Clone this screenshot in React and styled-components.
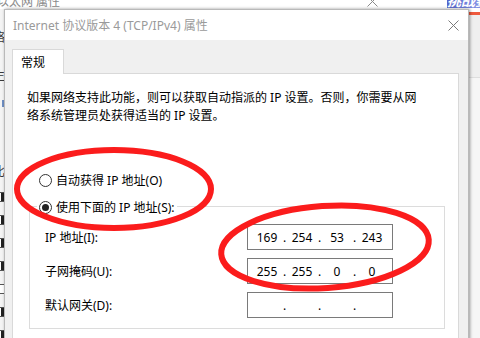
import React from "react";
import styled, { createGlobalStyle } from "styled-components";

const GlobalStyle = createGlobalStyle`
  html, body {
    margin: 0;
    padding: 0;
    background: #ffffff;
  }
  body {
    font-family: "Noto Sans", "Noto Sans CJK SC", sans-serif;
    font-size: 12px;
    color: #000;
    overflow: hidden;
  }
`;

const Desktop = styled.div`
  position: relative;
  width: 480px;
  height: 338px;
  overflow: hidden;
  background: #ffffff;
`;

/* window behind the dialog: 以太网 属性 */
const BackWindow = styled.div`
  position: absolute;
  left: 0;
  top: 0;
  width: 447px;
  height: 338px;
  display: flex;
  flex-direction: column;
  background: #f4f4f4;
`;

const BackTitle = styled.div`
  height: 9px;
  flex: none;
  background: #ffffff;
  overflow: hidden;
  display: flex;
  justify-content: space-between;
  align-items: flex-start;
  color: #8a8a8a;
  line-height: 12px;
`;

const BackTitleText = styled.span`
  margin: -4px 0 0 -3px;
  white-space: nowrap;
`;

const BackClose = styled.svg`
  margin: -4px 69px 0 0;
  flex: none;
`;

const BackBody = styled.div`
  flex: 1;
  display: flex;
`;

const LeftStrip = styled.div`
  width: 5px;
  overflow: hidden;
  display: flex;
  flex-direction: column;
`;

const StripGlyph = styled.span`
  margin-top: ${(p) => p.$top}px;
  margin-left: -7px;
  line-height: 12px;
  height: 12px;
  color: #3a3a3a;
  white-space: nowrap;
`;

const StripMark = styled.span`
  margin-top: ${(p) => p.$top}px;
  margin-left: 2px;
  width: 5px;
  height: 7px;
  background: #6f8fc4;
`;

const CheckStack = styled.div`
  margin-top: 14px;
  display: flex;
  flex-direction: column;
  gap: 13px;
`;

const StripCheck = styled.span`
  margin-left: -5px;
  width: 8px;
  height: 8px;
  border: 1px solid #555;
  background: ${(p) => (p.$on ? "linear-gradient(90deg, #fff 60%, #222 60%)" : "#fff")};
`;

/* window at the top right */
const BannerWindow = styled.div`
  position: absolute;
  right: 0;
  top: 0;
  width: 33px;
  height: 338px;
  display: flex;
  flex-direction: column;
  background: #eeeeee;
`;

const BannerImage = styled.div`
  height: 8px;
  overflow: hidden;
  background: linear-gradient(90deg, #5364c9, #8594e6);
  color: #ffffff;
  font-weight: bold;
  font-style: italic;
  font-size: 14px;
  line-height: 14px;
  white-space: nowrap;
  & span {
    display: block;
    margin-top: -6px;
  }
`;

const BannerGap = styled.div`
  height: 4px;
  background: #ffffff;
`;

const BannerRule = styled.div`
  height: 3px;
  background: #ef5a3e;
`;

const BannerTop = styled.div`
  height: 62px;
  background: #efefef;
  border-bottom: 1px solid #dedede;
`;

const BannerRest = styled.div`
  flex: 1;
  background: #f6f6f6;
`;

/* the dialog */
const Dialog = styled.div`
  position: absolute;
  left: 4px;
  top: 9px;
  width: 465px;
  height: 345px;
  box-sizing: border-box;
  border: 1px solid #b9b9b9;
  box-shadow: 1px 0 3px rgba(0, 0, 0, 0.4);
  background: #f0f0f0;
  display: flex;
  flex-direction: column;
  z-index: 2;
`;

const TitleBar = styled.div`
  height: 30px;
  flex: none;
  background: #ffffff;
  display: flex;
  align-items: center;
  justify-content: space-between;
  padding: 0 9px 0 8px;
`;

const TitleText = styled.span`
  color: #9a9a9a;
  white-space: nowrap;
`;

const Body = styled.div`
  flex: 1;
  display: flex;
  flex-direction: column;
  padding: 9px 9px 0 7px;
`;

const TabStrip = styled.div`
  display: flex;
`;

const Tab = styled.div`
  position: relative;
  z-index: 1;
  box-sizing: border-box;
  width: 52px;
  height: 25px;
  margin-bottom: -1px;
  padding-left: 8px;
  border: 1px solid #d9d9d9;
  border-bottom: none;
  background: #ffffff;
  display: flex;
  align-items: center;
`;

const Panel = styled.div`
  flex: 1;
  border: 1px solid #d9d9d9;
  background: #ffffff;
  display: flex;
  flex-direction: column;
  padding: 15px 0 0 14px;
`;

const Intro = styled.p`
  margin: 0;
  line-height: 18px;
`;

const RadioRow = styled.div`
  display: flex;
  align-items: center;
  height: 20px;
  margin-top: 45px;
  margin-left: 12px;
`;

const RadioCircle = styled.span`
  box-sizing: border-box;
  width: 13px;
  height: 13px;
  border-radius: 50%;
  border: 1px solid #333333;
  background: #ffffff;
  display: flex;
  align-items: center;
  justify-content: center;
  margin-right: 4px;
  &::after {
    content: "";
    display: ${(p) => (p.$checked ? "block" : "none")};
    width: 7px;
    height: 7px;
    border-radius: 50%;
    background: #222222;
  }
`;

const Group = styled.div`
  box-sizing: border-box;
  width: 416px;
  margin: 16px 0 0 2px;
  border: 1px solid #dcdcdc;
  padding: 0 0 10px 15px;
  display: flex;
  flex-direction: column;
  gap: 8px;
`;

const Legend = styled.div`
  align-self: flex-start;
  display: flex;
  align-items: center;
  height: 20px;
  margin: -10px 0 -1px -8px;
  padding: 0 2px;
  background: #ffffff;
`;

const FieldRow = styled.div`
  display: flex;
  align-items: center;
`;

const FieldLabel = styled.span`
  width: 202px;
`;

const IpBox = styled.div`
  box-sizing: border-box;
  width: 146px;
  height: 26px;
  border: 1px solid #7a7a7a;
  padding-left: 5px;
  display: flex;
  align-items: center;
`;

const Octet = styled.span`
  width: 28px;
  text-align: center;
`;

const Dot = styled.span`
  width: 7px;
  text-align: center;
`;

const Marks = styled.svg`
  position: absolute;
  left: 0;
  top: 0;
  z-index: 5;
  pointer-events: none;
`;

const fields = [
  { label: "IP 地址(I):", ip: ["169", "254", "53", "243"] },
  { label: "子网掩码(U):", ip: ["255", "255", "0", "0"] },
  { label: "默认网关(D):", ip: ["", "", "", ""] },
];

const IpAddress = ({ parts }) => (
  <IpBox>
    {parts.map((part, i) => (
      <React.Fragment key={i}>
        {i > 0 && <Dot>.</Dot>}
        <Octet>{part}</Octet>
      </React.Fragment>
    ))}
  </IpBox>
);

export default function App() {
  return (
    <Desktop>
      <GlobalStyle />
      <BackWindow>
        <BackTitle>
          <BackTitleText>以太网 属性</BackTitleText>
          <BackClose width="11" height="11" viewBox="0 0 11 11">
            <path d="M0.5 0.5 L10.5 10.5 M10.5 0.5 L0.5 10.5" stroke="#8a8a8a" strokeWidth="1" />
          </BackClose>
        </BackTitle>
        <BackBody>
          <LeftStrip>
            <StripGlyph $top={23}>络</StripGlyph>
            <StripGlyph $top={26}>生</StripGlyph>
            <StripMark $top={18} />
            <StripGlyph $top={59}>比</StripGlyph>
            <CheckStack>
              <StripCheck $on />
              <StripCheck $on />
              <StripCheck $on />
              <StripCheck $on />
              <StripCheck />
              <StripCheck $on />
              <StripCheck $on />
            </CheckStack>
          </LeftStrip>
        </BackBody>
      </BackWindow>

      <BannerWindow>
        <BannerImage>
          <span>挑战赛E开</span>
        </BannerImage>
        <BannerGap />
        <BannerRule />
        <BannerTop />
        <BannerRest />
      </BannerWindow>

      <Dialog>
        <TitleBar>
          <TitleText>Internet 协议版本 4 (TCP/IPv4) 属性</TitleText>
          <svg width="11" height="11" viewBox="0 0 11 11">
            <path d="M0.5 0.5 L10.5 10.5 M10.5 0.5 L0.5 10.5" stroke="#7a7a7a" strokeWidth="1" />
          </svg>
        </TitleBar>
        <Body>
          <TabStrip>
            <Tab>常规</Tab>
          </TabStrip>
          <Panel>
            <Intro>
              如果网络支持此功能，则可以获取自动指派的 IP 设置。否则，你需要从网
              <br />
              络系统管理员处获得适当的 IP 设置。
            </Intro>
            <RadioRow>
              <RadioCircle />
              自动获得 IP 地址(O)
            </RadioRow>
            <Group>
              <Legend>
                <RadioCircle $checked />
                使用下面的 IP 地址(S):
              </Legend>
              {fields.map((f) => (
                <FieldRow key={f.label}>
                  <FieldLabel>{f.label}</FieldLabel>
                  <IpAddress parts={f.ip} />
                </FieldRow>
              ))}
            </Group>
          </Panel>
        </Body>
      </Dialog>

      <Marks width="480" height="338" viewBox="0 0 480 338">
        <ellipse cx="114" cy="189" rx="97" ry="39" fill="none" stroke="#fb1c1c" strokeWidth="6" />
        <ellipse
          cx="325"
          cy="247"
          rx="104"
          ry="41"
          fill="none"
          stroke="#fb1c1c"
          strokeWidth="6"
          transform="rotate(-4 325 247)"
        />
      </Marks>
    </Desktop>
  );
}
